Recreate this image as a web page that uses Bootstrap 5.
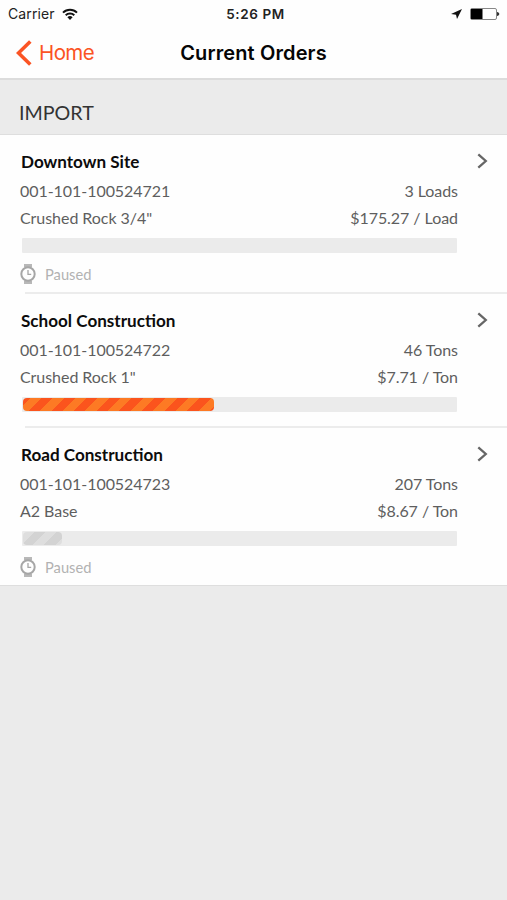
<!DOCTYPE html>
<html lang="en">
<head>
<meta charset="utf-8">
<meta name="viewport" content="width=device-width, initial-scale=1">
<title>Current Orders</title>
<link href="https://cdn.jsdelivr.net/npm/bootstrap@5.3.0/dist/css/bootstrap.min.css" rel="stylesheet">
<style>
body{background:#ebebeb;font-family:Lato,"Liberation Sans",sans-serif;min-height:100vh;color:#5e5e5e}
.top-area{background:#fefefe;height:80px;border-bottom:2px solid #dcdcdc;font-family:Inter,"Liberation Sans",sans-serif;color:#050505}
.status-line{height:27px;padding:0 7px 0 8px;font-size:14px;display:grid;grid-template-columns:1fr auto 1fr;color:#222}
.carrier{letter-spacing:.1px}
.clock{font-size:13.5px;font-weight:600;letter-spacing:.75px;padding-left:3px;padding-top:1px}
.clock{letter-spacing:.85px;letter-spacing:.6px}
.title-line{height:51px;padding:0 16px;display:grid;grid-template-columns:1fr auto 1fr}
.back-link{color:#fb5424;font-size:20.5px;letter-spacing:-.6px;gap:7px}
.back-link span{padding-top:2px}
.page-title{font-size:20px;font-weight:600;letter-spacing:.12px}
.section-head{height:55px;padding:19px 19px 0;font-size:19.700px;font-weight:400;line-height:28px;color:#333;border-bottom:1px solid #dedede}
.order{height:158px;padding:14px 50px 0 21px;background:#fefefe;font-size:16px;line-height:26px}
.order.running{height:134px}
.rule + .order{padding-top:15px}
.order-name{font-size:17.100px;font-weight:700;color:#0c0c0c;line-height:25px;margin-bottom:4px;margin-right:-31px}
.order-line{letter-spacing:-.05px;margin:0 -1px}
.order-line + .order-line{margin-top:1px}
.order .progress{height:15px;margin:7px 0 0 1px;background:#ebebeb;border-radius:1px}
.order .progress-bar{height:13px;margin:1px 0 0 1px;border-radius:4px;background:repeating-linear-gradient(135deg,#fb541d 0 5px,#fd7a24 5px 13px,#fb541d 13px 16px)}
.order .progress-bar.idle{background:repeating-linear-gradient(135deg,#dedede 0 8px,#d3d3d3 8px 16px)}
.paused{font-size:14.700px;line-height:20px;margin:11px 0 0 -1px;gap:9px;color:#b2b2b2}
.rule{height:2px;background:#ececec;margin:-1px 0 -1px 25px;position:relative}
.order-list{border-bottom:1px solid #dedede;height:451px}
</style>
<script src="https://cdn.jsdelivr.net/npm/bootstrap@5.3.0/dist/js/bootstrap.bundle.min.js"></script>
</head>
<body>
<svg class="d-none">
<symbol id="watch" viewBox="0 0 16 20"><path d="M4 0h8v3H4zM4 17h8v3H4z" fill="#b8b8b8"/><circle cx="8" cy="10" r="6.700" fill="#fefefe" stroke="#a6a6a6" stroke-width="2"/><path d="M8 6v4.300h3.200" fill="none" stroke="#a6a6a6" stroke-width="1.300"/></symbol>
<symbol id="next" viewBox="0 0 12 16"><path d="M2.300 1.300 9.800 8l-7.500 6.700" fill="none" stroke="#666" stroke-width="2.300"/></symbol>
</svg>
<header class="top-area">
<div class="status-line align-items-center">
<div class="d-flex align-items-center"><span class="carrier">Carrier</span>
<svg style="margin-left:7px" width="16" height="12" viewBox="0 0 16 12"><g fill="none" stroke="#111" stroke-width="2"><path d="M1 4.600a10 10 0 0 1 14 0M3.700 7.300a6.200 6.200 0 0 1 8.600 0"/></g><path d="m8 12-2.600-2.800a3.800 3.800 0 0 1 5.200 0z" fill="#111"/></svg></div>
<span class="clock">5:26 PM</span>
<div class="d-flex align-items-center justify-content-end">
<svg width="11" height="10" viewBox="0 0 11 10"><path d="M11 0 6 10 5 5.800 0 5z" fill="#111"/></svg>
<svg class="ms-2" width="30" height="14" viewBox="1 0 30 14"><rect x="1.500" y="1.500" width="26" height="11" rx="1.500" fill="#fff" stroke="#888"/><path d="M2 2h11.500v10H2z" fill="#000"/><path d="M28 5c3 .3 3 3.700 0 4z" fill="#333"/></svg></div>
</div>
<div class="title-line align-items-center">
<a class="back-link d-flex align-items-center text-decoration-none" href="#"><svg width="16" height="26" viewBox="0 0 16 26"><path d="M14.300 1.500 2.500 13l11.800 11.500" fill="none" stroke="#fb5424" stroke-width="3.600"/></svg><span>Home</span></a>
<h1 class="page-title m-0">Current Orders</h1>
</div>
</header>
<main>
<h2 class="section-head m-0">IMPORT</h2>
<div class="order-list">
<article class="order">
<div class="order-name d-flex justify-content-between"><span>Downtown Site</span><svg width="12" height="16" class="mt-1"><use href="#next"/></svg></div>
<div class="order-line d-flex justify-content-between"><span>001-101-100524721</span><span>3 Loads</span></div>
<div class="order-line d-flex justify-content-between"><span>Crushed Rock 3/4"</span><span>$175.27 / Load</span></div>
<div class="progress"></div>
<div class="paused d-flex align-items-center"><svg width="16" height="20"><use href="#watch"/></svg><span>Paused</span></div>
</article>
<div class="rule"></div>
<article class="order running">
<div class="order-name d-flex justify-content-between"><span>School Construction</span><svg width="12" height="16" class="mt-1"><use href="#next"/></svg></div>
<div class="order-line d-flex justify-content-between"><span>001-101-100524722</span><span>46 Tons</span></div>
<div class="order-line d-flex justify-content-between"><span>Crushed Rock 1"</span><span>$7.71 / Ton</span></div>
<div class="progress"><div class="progress-bar" style="width:43.800%"></div></div>
</article>
<div class="rule"></div>
<article class="order">
<div class="order-name d-flex justify-content-between"><span>Road Construction</span><svg width="12" height="16" class="mt-1"><use href="#next"/></svg></div>
<div class="order-line d-flex justify-content-between"><span>001-101-100524723</span><span>207 Tons</span></div>
<div class="order-line d-flex justify-content-between"><span>A2 Base</span><span>$8.67 / Ton</span></div>
<div class="progress"><div class="progress-bar idle" style="width:9%"></div></div>
<div class="paused d-flex align-items-center"><svg width="16" height="20"><use href="#watch"/></svg><span>Paused</span></div>
</article>
</div>
</main>
</body>
</html>
